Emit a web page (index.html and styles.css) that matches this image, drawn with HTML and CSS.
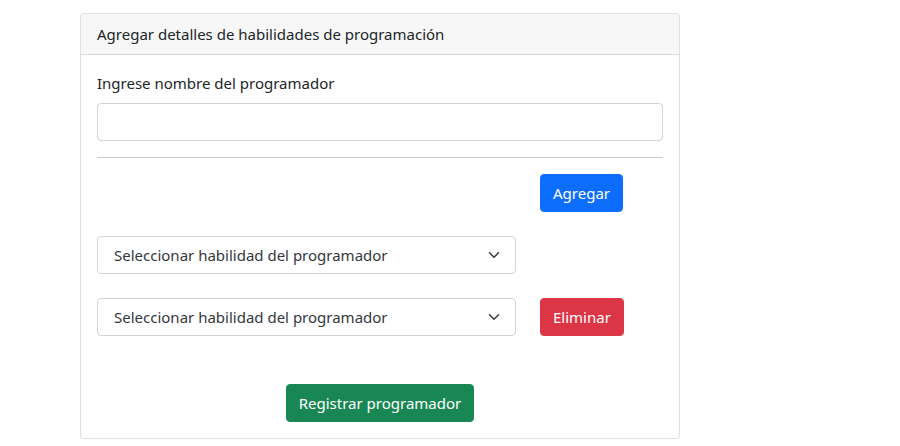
FILE: index.html
```html
<!DOCTYPE html>
<html lang="es">
<head>
    <meta charset="UTF-8">
    <meta name="viewport" content="width=device-width, initial-scale=1.0">
    <title>Habilidades de programación</title>
    <link rel="stylesheet" href="styles.css">
</head>
<body>
    <div class="page">
        <div class="card">
            <div class="card-header">Agregar detalles de habilidades de programación</div>
            <div class="card-body">
                <label class="form-label" for="nombre">Ingrese nombre del programador</label>
                <input class="form-control" id="nombre" type="text">
                <hr>
                <div class="skill-row">
                    <div></div>
                    <button class="btn btn-primary">Agregar</button>
                </div>
                <div class="skill-row">
                    <div class="select-wrap">
                        <select class="form-select">
                            <option>Seleccionar habilidad del programador</option>
                        </select>
                        <svg class="chevron" viewBox="0 0 16 16" width="16" height="12"><path fill="none" stroke="#343a40" stroke-linecap="round" stroke-linejoin="round" stroke-width="2" d="m2 5 6 6 6-6"/></svg>
                    </div>
                    <div></div>
                </div>
                <div class="skill-row">
                    <div class="select-wrap">
                        <select class="form-select">
                            <option>Seleccionar habilidad del programador</option>
                        </select>
                        <svg class="chevron" viewBox="0 0 16 16" width="16" height="12"><path fill="none" stroke="#343a40" stroke-linecap="round" stroke-linejoin="round" stroke-width="2" d="m2 5 6 6 6-6"/></svg>
                    </div>
                    <button class="btn btn-danger">Eliminar</button>
                </div>
                <div class="submit-row">
                    <button class="btn btn-success">Registrar programador</button>
                </div>
            </div>
        </div>
    </div>
</body>
</html>
```

FILE: styles.css
```css
body {
    margin: 0;
    font-family: "Noto Sans", "Open Sans", sans-serif;
    font-size: 15px;
    line-height: 24px;
    color: #212529;
    background: #fff;
}
.page {
    padding: 13px 0 0 80px;
}
.card {
    width: 600px;
    box-sizing: border-box;
    border: 1px solid rgba(0, 0, 0, 0.125);
    border-radius: 4px;
    background: #fff;
}
.card-header {
    padding: 8px 16px;
    background: #f7f7f7;
    border-bottom: 1px solid rgba(0, 0, 0, 0.125);
    border-radius: 3px 3px 0 0;
}
.card-body {
    padding: 16px;
}
.form-label {
    display: block;
    margin-bottom: 8px;
}
.form-control,
.form-select {
    display: block;
    width: 100%;
    box-sizing: border-box;
    height: 38px;
    padding: 6px 12px;
    font: inherit;
    color: #212529;
    background: #fff;
    border: 1px solid #ced4da;
    border-radius: 4px;
    outline: none;
}
.form-select {
    padding: 6px 36px 6px 16px;
    color: #33383d;
    -webkit-appearance: none;
    appearance: none;
}
hr {
    margin: 16px 0;
    border: 0;
    border-top: 1px solid #212529;
    opacity: 0.25;
}
.skill-row {
    display: grid;
    grid-template-columns: 419px auto;
    column-gap: 24px;
    justify-content: start;
    margin-bottom: 24px;
}
.skill-row:first-of-type {
    margin-top: 16px;
}
.select-wrap {
    position: relative;
}
.chevron {
    position: absolute;
    right: 14px;
    top: 13px;
    pointer-events: none;
}
.btn {
    height: 38px;
    padding: 6px 12px;
    font: inherit;
    color: #fff;
    border: 1px solid transparent;
    border-radius: 4px;
    cursor: pointer;
}
.btn-primary {
    background: #0d6efd;
    border-color: #0d6efd;
}
.btn-danger {
    background: #dc3545;
    border-color: #dc3545;
}
.btn-success {
    background: #198754;
    border-color: #198754;
}
.submit-row {
    text-align: center;
    padding-top: 24px;
}
```
